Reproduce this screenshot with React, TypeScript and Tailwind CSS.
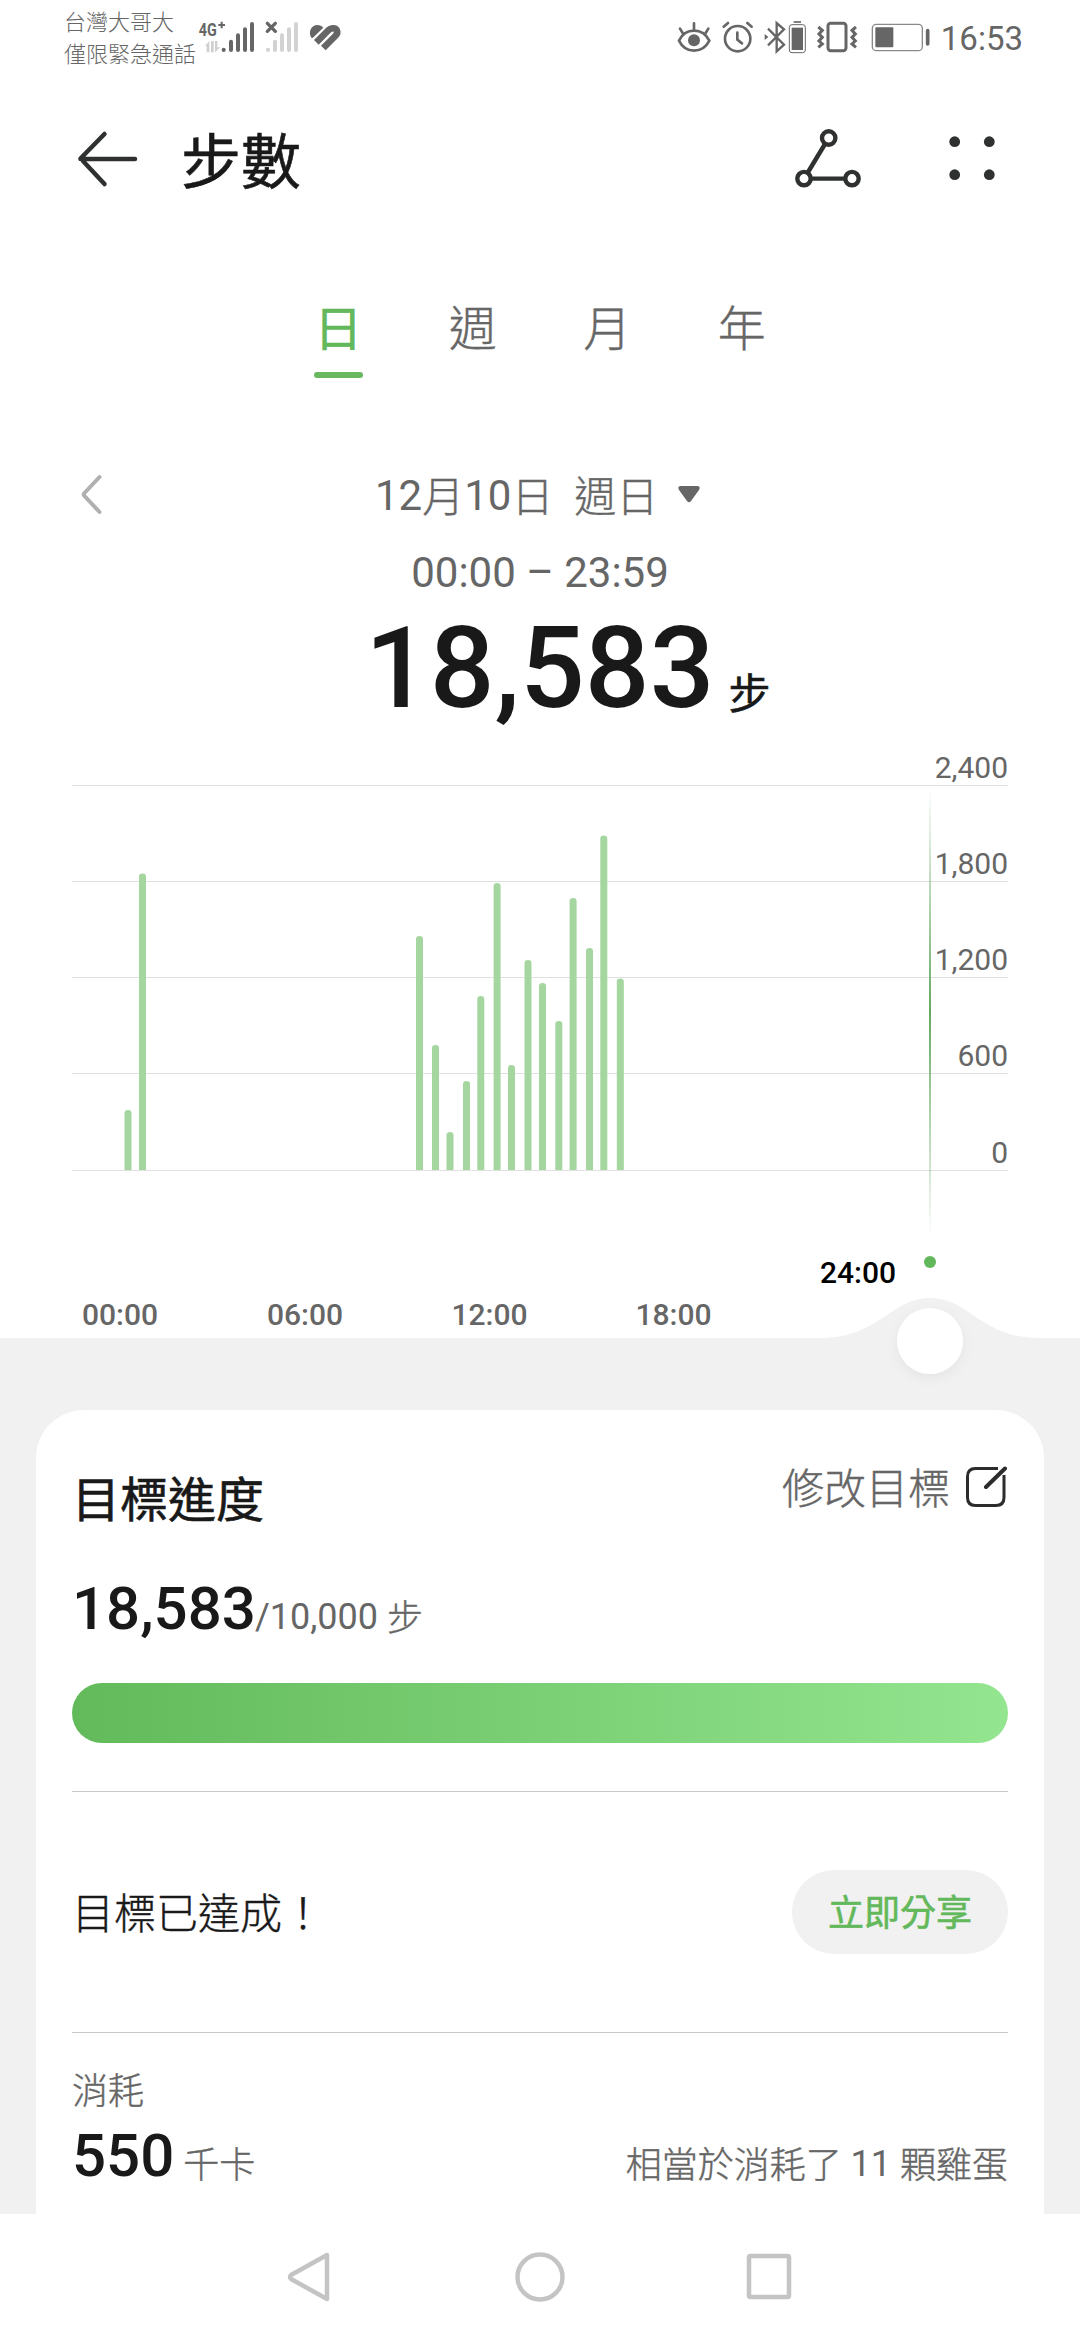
import React from 'react';

type Bar = { x: number; top: number };

const TABS = ['日', '週', '月', '年'];

const CHART_BOTTOM = 1170;

const GRID = [
  { y: 785, label: '2,400' },
  { y: 881, label: '1,800' },
  { y: 977, label: '1,200' },
  { y: 1073, label: '600' },
  { y: 1170, label: '0' },
];

const HOURS = [
  { x: 120, label: '00:00' },
  { x: 305, label: '06:00' },
  { x: 489.5, label: '12:00' },
  { x: 673.5, label: '18:00' },
];

const BARS: Bar[] = [
  { x: 124.5, top: 1110 },
  { x: 139, top: 873.5 },
  { x: 416, top: 936 },
  { x: 432, top: 1045 },
  { x: 446.5, top: 1132 },
  { x: 463, top: 1081 },
  { x: 477.3, top: 996 },
  { x: 493.6, top: 883 },
  { x: 508, top: 1065 },
  { x: 524.5, top: 960 },
  { x: 539, top: 983 },
  { x: 555.3, top: 1021 },
  { x: 569.6, top: 898 },
  { x: 586, top: 948 },
  { x: 600.3, top: 835.5 },
  { x: 616.8, top: 978.5 },
];

// light CJK strokes, thickened a little to sit next to Roboto digits
const cjkLight = 'font-light [-webkit-text-stroke:0.4px_currentColor]';
const cjkInline = 'align-[-2px] font-light leading-none [-webkit-text-stroke:0.4px_currentColor]';
const cjkTitle = '[-webkit-text-stroke:0.6px_currentColor]';

const SignalIcons = () => (
  <svg width="150" height="80" viewBox="465 0 450 240" fill="none">
    <text
      x="476"
      y="107"
      fontSize="57"
      fontWeight="700"
      textLength="54"
      lengthAdjust="spacingAndGlyphs"
      fill="#666"
    >
      4G
    </text>
    <path d="M535 75h20M545 65v20" stroke="#666" strokeWidth="6" />
    <g fill="#cfcfcf">
      <path d="M495 138L508 123V157H500V138ZM513 123H521V157H513Z" />
      <path d="M525 123H532V142H541L525 157Z" />
    </g>
    <g stroke="#666" strokeWidth="12" strokeLinecap="round">
      <path d="M551 149v1M573 125v25M594 106v44M615 88v62M636 72v78" />
    </g>
    <g stroke="#d2d2d2" strokeWidth="12" strokeLinecap="round">
      <path d="M684 149v1M705 125v25M726 106v44M747 88v62M768 72v78" />
    </g>
    <path
      d="M682 70l24 24M706 70l-24 24"
      stroke="#666"
      strokeWidth="10"
      strokeLinecap="round"
    />
    <path d="M814 113C803 96 814 75 832 75C840 75 845 78 850 83L818 114Z" fill="#666" />
    <path
      d="M829 127L862 94C872 82 886 83 890 90C894 98 891 103 886 108L850 144"
      stroke="#666"
      strokeWidth="20"
    />
  </svg>
);

const StatusIcons = () => (
  <svg width="260" height="80" viewBox="40 0 780 240" fill="none">
    {/* eye comfort */}
    <g stroke="#666" strokeWidth="8" strokeLinecap="round">
      <path d="M55 122C74 82 126 82 146 122C126 162 74 162 55 122Z" />
      <path d="M100 70v18M58 86l8 13M143 86l-8 13" />
    </g>
    <circle cx="100" cy="121" r="18" fill="#666" />
    {/* alarm */}
    <g stroke="#666" strokeWidth="8" strokeLinecap="round">
      <circle cx="231" cy="116" r="38" />
      <path d="M230 98v21l14 11M189 80l13-11M273 80l-13-11" />
    </g>
    {/* bluetooth */}
    <path
      d="M322 86l48 48l-22 20V69l22 19l-48 48"
      stroke="#666"
      strokeWidth="7"
    />
    <path d="M312 102l11 9l-11 9z" fill="#666" />
    <rect x="386" y="74" width="48" height="84" rx="8" stroke="#666" strokeWidth="3" />
    <rect x="393" y="83" width="34" height="67" fill="#666" />
    <path d="M399 66h22" stroke="#666" strokeWidth="5" />
    {/* vibrate */}
    <rect x="502" y="70" width="54" height="82" rx="8" stroke="#666" strokeWidth="9" />
    <path
      d="M473 81l12 10l-10 11l10 10l-10 11l10 9l-12 10M586 81l-12 10l10 11l-10 10l10 11l-10 9l12 10"
      stroke="#666"
      strokeWidth="9"
    />
    {/* battery */}
    <rect x="635" y="73" width="150" height="79" rx="12" stroke="#8a8a8a" strokeWidth="4" />
    <rect x="644" y="82" width="54" height="60" rx="3" fill="#666" />
    <path d="M801 92v40" stroke="#666" strokeWidth="11" strokeLinecap="round" />
  </svg>
);

const StatusBar = () => (
  <div className="flex h-20 items-start pl-16 pr-[57px] text-[#666]">
    <div className="w-[131px] whitespace-nowrap pt-[7px] text-[22px] font-light leading-8">
      <div>台灣大哥大</div>
      <div>僅限緊急通話</div>
    </div>
    <SignalIcons />
    <div className="flex-1" />
    <StatusIcons />
    <span className="ml-[7px] pt-[18px] text-[33px] leading-[42px]">16:53</span>
  </div>
);

const Header = () => (
  <header className="flex h-40 items-center pl-[72px] pr-[72px]">
    <svg width="72" height="72" viewBox="0 0 72 72" fill="none" stroke="#2f3030" strokeWidth="4.5" strokeLinecap="round">
      <path d="M8.500 35H63M32.500 10L8.500 34.500M11 37L32.500 60" />
    </svg>
    <h1 className={`ml-[37px] flex-1 pt-2 text-[60px] leading-none text-[#191919] ${cjkTitle}`}>
      步數
    </h1>
    <svg width="72" height="72" viewBox="792 122 72 72" fill="none" stroke="#2f3030" strokeWidth="4.400">
      <circle cx="828.700" cy="136" r="6.700" />
      <circle cx="804" cy="176.600" r="6.700" />
      <circle cx="852" cy="176.600" r="6.700" />
      <path d="M825 142L807.500 171M811 176.600h34" />
    </svg>
    <svg className="ml-[72px]" width="72" height="72" viewBox="936 122 72 72" fill="#2f3030">
      <circle cx="954.700" cy="139.700" r="5.400" />
      <circle cx="989.300" cy="139.700" r="5.400" />
      <circle cx="954.700" cy="172.700" r="5.400" />
      <circle cx="989.300" cy="172.700" r="5.400" />
    </svg>
  </header>
);

const Tabs = () => (
  <nav className="flex justify-center pt-[58px]">
    {TABS.map((tab, i) => (
      <div key={tab} className="flex h-20 w-[134.500px] flex-col items-center">
        <span
          className={
            i === 0
              ? `text-[48px] leading-[64px] text-[#63b85b] ${cjkTitle}`
              : `text-[48px] leading-[64px] text-[#666] ${cjkLight}`
          }
        >
          {tab}
        </span>
        {i === 0 && <div className="mt-2.5 h-1.5 w-[49px] rounded-full bg-[#68b860]" />}
      </div>
    ))}
  </nav>
);

const Summary = () => (
  <section>
    <div className="mt-[86px] flex h-16 items-center pl-[72px]">
      <svg width="36" height="48" viewBox="0 0 36 48" fill="none" stroke="#b0b0b0" strokeWidth="4" strokeLinecap="round" strokeLinejoin="round">
        <path d="M27.500 5L12.500 21Q11 22.500 12.500 24L27.500 40" />
      </svg>
      <div className="ml-[267px] flex items-center text-[42px] leading-[64px] text-[#666]">
        <span className="whitespace-pre">
          12<span className={cjkInline}>月</span>10
          <span className={cjkInline}>日</span>
          &nbsp; <span className={cjkInline}>週日</span>
        </span>
        <svg className="ml-[19px]" width="24" height="20" viewBox="0 0 24 20">
          <path d="M4 0H20Q24 0 22 4L14 15Q12 17.500 10 15L2 4Q0 0 4 0Z" fill="#666" />
        </svg>
      </div>
    </div>
    <div className="mt-[21px] text-center text-[42px] leading-[48px] text-[#666]">
      00:00 – 23:59
    </div>
    <div className="mt-[11px] flex h-[120px] items-baseline pl-[365px] text-[#191919]">
      <span className="text-[114px] font-medium leading-[120px]">18,583</span>
      <span className={`ml-3.5 text-[42px] leading-none ${cjkTitle}`}>
        <span className="align-[-2px]">步</span>
      </span>
    </div>
  </section>
);

const StepsChart = () => (
  <svg className="mt-3 block" width="1080" height="670" viewBox="0 740 1080 670">
    <defs>
      <linearGradient id="cursor" x1="0" y1="0" x2="0" y2="1">
        <stop offset="0" stopColor="#66a862" stopOpacity="0" />
        <stop offset="0.5" stopColor="#66a862" />
        <stop offset="1" stopColor="#66a862" stopOpacity="0" />
      </linearGradient>
      <filter id="knob" x="-50%" y="-50%" width="200%" height="200%">
        <feDropShadow dx="0" dy="4" stdDeviation="6" floodColor="#000" floodOpacity="0.05" />
      </filter>
    </defs>

    {GRID.map(({ y }) => (
      <rect key={y} x="72" y={y} width="936" height="1" fill="#e0e0e0" />
    ))}

    {BARS.map(({ x, top }) => (
      <path
        key={x}
        d={`M${x} ${CHART_BOTTOM}V${top + 3}q0 -3 3.500 -3t3.500 3V${CHART_BOTTOM}z`}
        fill="#a5d6a0"
      />
    ))}

    <rect x="929" y="787" width="2" height="450" fill="url(#cursor)" />

    <g fontSize="30" fill="#666" textAnchor="end">
      {GRID.map(({ y, label }) => (
        <text key={label} x="1008" y={y - 7.500}>
          {label}
        </text>
      ))}
    </g>

    <path
      d="M0 1338H820C880 1338 890 1298 930 1298S980 1338 1040 1338H1080V1410H0Z"
      fill="#f1f1f1"
    />

    <g fontSize="30" fontWeight="500" fill="#666" textAnchor="middle">
      {HOURS.map(({ x, label }) => (
        <text key={label} x={x} y="1325">
          {label}
        </text>
      ))}
      <text x="858" y="1283" fill="#000">
        24:00
      </text>
    </g>

    <circle cx="930" cy="1262" r="6" fill="#63b85b" />
    <circle cx="930" cy="1341" r="33" fill="#fff" filter="url(#knob)" />
  </svg>
);

const EditIcon = () => (
  <svg width="42" height="42" viewBox="0 0 42 42" fill="none" stroke="#2c2c2d" strokeLinecap="round">
    <path
      d="M32 2.500H9.500Q1.500 2.500 1.500 10.500V31.500Q1.500 39.500 9.500 39.500H30Q38 39.500 38 31.500V9"
      strokeWidth="3"
      strokeLinecap="butt"
    />
    <path d="M20 21L39 2.500" strokeWidth="4" />
  </svg>
);

const GoalCard = () => (
  <section className="mx-9 h-[804px] rounded-t-[48px] bg-white px-9 pt-14">
    <div className="flex h-[65px] items-start justify-between">
      <h2 className={`mt-[5px] text-[48px] leading-[60px] text-[#191919] ${cjkTitle}`}>目標進度</h2>
      <div className="flex text-[42px] leading-[48px] text-[#666]">
        <span className={`mr-4 ${cjkLight}`}>修改目標</span>
        <EditIcon />
      </div>
    </div>
    <div className="mt-12 flex h-[60px] items-baseline text-[36px] leading-none text-[#666]">
      <span className="text-[60px] font-medium leading-none text-[#191919]">18,583</span>
      <span className="-ml-px">
        /10,000 <span className={cjkInline}>步</span>
      </span>
    </div>
    <div className="mt-11 h-[60px] rounded-full bg-linear-to-r from-[#62ba5a] to-[#93e58f]" />
    <div className="mt-12 h-px bg-[#c8c8c8]" />
    <div className="flex h-60 items-center justify-between">
      <span className={`pt-1.5 text-[42px] leading-none text-[#191919] ${cjkLight}`}>
        目標已達成！
      </span>
      <button className={`h-[84px] w-[216px] rounded-full bg-[#f1f1f1] pt-1 text-[36px] leading-none text-[#63b85b] ${cjkTitle}`}>
        立即分享
      </button>
    </div>
    <div className="h-px bg-[#c8c8c8]" />
    <div className={`mt-[35px] text-[36px] leading-[48px] text-[#666] ${cjkLight}`}>消耗</div>
    <div className="mt-2.5 flex items-baseline text-[36px] leading-none text-[#666]">
      <span className="text-[60px] font-medium leading-none text-[#191919]">550</span>
      <span className="ml-[9px] flex-1">
        <span className={cjkInline}>千卡</span>
      </span>
      <span>
        <span className={cjkInline}>相當於消耗了</span> 11{' '}
        <span className={cjkInline}>顆雞蛋</span>
      </span>
    </div>
  </section>
);

const NavBar = () => (
  <div className="flex h-[126px] items-center justify-center gap-[180px] bg-white">
    <svg width="50" height="50" viewBox="0 0 50 50" fill="none" stroke="#c4c4c4" strokeWidth="4.500" strokeLinejoin="round">
      <path d="M42 3V47L6 27Q4 25 6 23Z" />
    </svg>
    <svg width="50" height="50" viewBox="0 0 50 50" fill="none" stroke="#c4c4c4" strokeWidth="4.500">
      <circle cx="25" cy="25" r="22.500" />
    </svg>
    <svg width="50" height="50" viewBox="0 0 50 50" fill="none" stroke="#c4c4c4" strokeWidth="4.500">
      <rect x="4" y="4" width="40" height="41" rx="1.500" />
    </svg>
  </div>
);

export default function App() {
  return (
    <div className="h-[2340px] w-[1080px] overflow-hidden bg-white font-['Roboto','Noto_Sans_CJK_TC',sans-serif]">
      <StatusBar />
      <Header />
      <Tabs />
      <Summary />
      <StepsChart />
      <div className="bg-[#f1f1f1]">
        <GoalCard />
      </div>
      <NavBar />
    </div>
  );
}
